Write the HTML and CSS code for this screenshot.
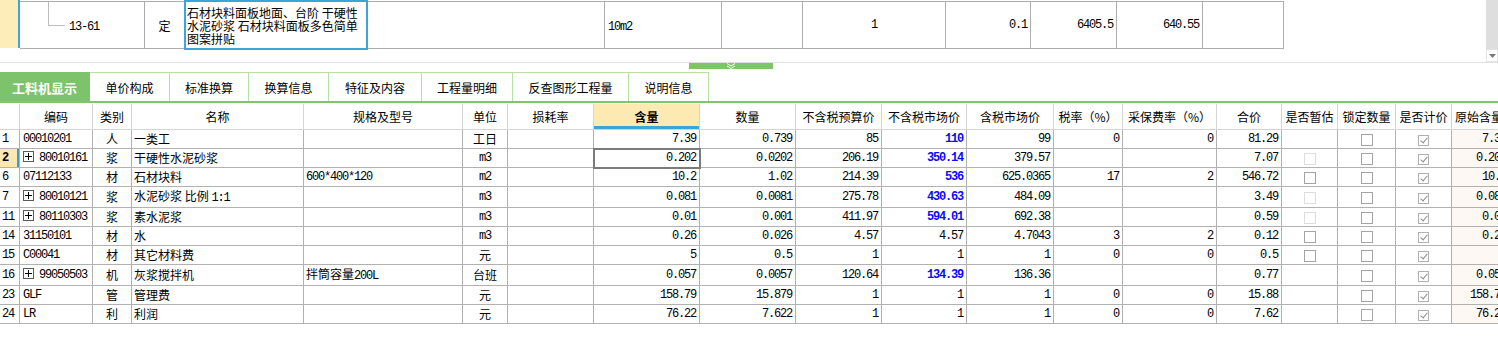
FILE: index.html
```html
<!DOCTYPE html>
<html lang="zh-CN">
<head>
<meta charset="utf-8">
<title>工料机显示</title>
<link rel="stylesheet" href="styles.css">
</head>
<body>
<div class="top">
  <div class="selbar"></div>
  <table class="prev">
    <colgroup>
      <col class="p1"><col class="p2"><col class="p3"><col class="p4"><col class="p5"><col class="p6"><col class="p7"><col class="p8"><col class="p9"><col class="p10"><col class="p11">
    </colgroup>
    <tr>
      <td class="tree"><span class="treeline"></span><span class="m">13-61</span></td>
      <td class="c">定</td>
      <td class="namebox">石材块料面板地面、台阶 干硬性水泥砂浆 石材块料面板多色简单图案拼贴</td>
      <td></td>
      <td><span class="m">10m2</span></td>
      <td></td>
      <td class="c m">1</td>
      <td class="r m">0.1</td>
      <td class="r m">6405.5</td>
      <td class="r m">640.55</td>
      <td></td>
    </tr>
  </table>
  <div class="vscroll"><div class="vthumb"></div><div class="varrow"><svg width="7" height="4" viewBox="0 0 7 4"><path d="M0 0H7L3.5 4Z" fill="#7a7a7a"/></svg></div></div>
</div>
<div class="split">
  <div class="handle"><svg width="12" height="6" viewBox="0 0 12 6"><path d="M2 0.5L6 3L10 0.5M2 3L6 5.5L10 3" fill="none" stroke="#fff" stroke-width="1"/></svg></div>
</div>
<div class="tabs">
  <div class="tab active">工料机显示</div>
  <div class="tab w80">单价构成</div>
  <div class="tab w79">标准换算</div>
  <div class="tab w80">换算信息</div>
  <div class="tab w93">特征及内容</div>
  <div class="tab w91">工程量明细</div>
  <div class="tab w116">反查图形工程量</div>
  <div class="tab w80">说明信息</div>
</div>
<table class="grid">
  <colgroup>
    <col class="g0"><col class="g1"><col class="g2"><col class="g3"><col class="g4"><col class="g5"><col class="g6"><col class="g7"><col class="g8"><col class="g9"><col class="g10"><col class="g11"><col class="g12"><col class="g13"><col class="g14"><col class="g15"><col class="g16"><col class="g17"><col class="g18">
  </colgroup>
  <thead>
    <tr>
      <th></th><th>编码</th><th>类别</th><th>名称</th><th>规格及型号</th><th>单位</th><th>损耗率</th><th class="hsel">含量</th><th>数量</th><th>不含税预算价</th><th>不含税市场价</th><th>含税市场价</th><th>税率（%）</th><th>采保费率（%）</th><th>合价</th><th>是否暂估</th><th>锁定数量</th><th>是否计价</th><th class="hl">原始含量</th>
    </tr>
  </thead>
  <tbody>
    <tr>
      <td class="no m">1</td><td class="code m">00010201</td><td class="c">人</td><td class="tx">一类工</td><td></td><td class="c">工日</td><td></td>
      <td class="r m">7.39</td><td class="r m">0.739</td><td class="r m">85</td><td class="r m b">110</td><td class="r m">99</td><td class="r m">0</td><td class="r m">0</td><td class="r m">81.29</td>
      <td></td><td class="c"><span class="cb"></span></td><td class="c"><span class="cb on"></span></td><td class="orig m">7.39</td>
    </tr>
    <tr class="cur">
      <td class="no m nosel">2</td><td class="code m"><span class="plus"></span>80010161</td><td class="c">浆</td><td class="tx">干硬性水泥砂浆</td><td></td><td class="c m">m3</td><td></td>
      <td class="r m focus">0.202</td><td class="r m">0.0202</td><td class="r m">206.19</td><td class="r m b">350.14</td><td class="r m">379.57</td><td></td><td></td><td class="r m">7.07</td>
      <td class="c"><span class="cb dis"></span></td><td class="c"><span class="cb"></span></td><td class="c"><span class="cb on"></span></td><td class="orig m">0.202</td>
    </tr>
    <tr>
      <td class="no m">6</td><td class="code m">07112133</td><td class="c">材</td><td class="tx">石材块料</td><td class="tx m">600*400*120</td><td class="c m">m2</td><td></td>
      <td class="r m">10.2</td><td class="r m">1.02</td><td class="r m">214.39</td><td class="r m b">536</td><td class="r m">625.0365</td><td class="r m">17</td><td class="r m">2</td><td class="r m">546.72</td>
      <td class="c"><span class="cb"></span></td><td class="c"><span class="cb"></span></td><td class="c"><span class="cb on"></span></td><td class="orig m">10.2</td>
    </tr>
    <tr>
      <td class="no m">7</td><td class="code m"><span class="plus"></span>80010121</td><td class="c">浆</td><td class="tx">水泥砂浆 比例 <span class="m">1:1</span></td><td></td><td class="c m">m3</td><td></td>
      <td class="r m">0.081</td><td class="r m">0.0081</td><td class="r m">275.78</td><td class="r m b">430.63</td><td class="r m">484.09</td><td></td><td></td><td class="r m">3.49</td>
      <td class="c"><span class="cb dis"></span></td><td class="c"><span class="cb"></span></td><td class="c"><span class="cb on"></span></td><td class="orig m">0.081</td>
    </tr>
    <tr>
      <td class="no m">11</td><td class="code m"><span class="plus"></span>80110303</td><td class="c">浆</td><td class="tx">素水泥浆</td><td></td><td class="c m">m3</td><td></td>
      <td class="r m">0.01</td><td class="r m">0.001</td><td class="r m">411.97</td><td class="r m b">594.01</td><td class="r m">692.38</td><td></td><td></td><td class="r m">0.59</td>
      <td class="c"><span class="cb dis"></span></td><td class="c"><span class="cb"></span></td><td class="c"><span class="cb on"></span></td><td class="orig m">0.01</td>
    </tr>
    <tr>
      <td class="no m">14</td><td class="code m">31150101</td><td class="c">材</td><td class="tx">水</td><td></td><td class="c m">m3</td><td></td>
      <td class="r m">0.26</td><td class="r m">0.026</td><td class="r m">4.57</td><td class="r m">4.57</td><td class="r m">4.7043</td><td class="r m">3</td><td class="r m">2</td><td class="r m">0.12</td>
      <td class="c"><span class="cb"></span></td><td class="c"><span class="cb"></span></td><td class="c"><span class="cb on"></span></td><td class="orig m">0.26</td>
    </tr>
    <tr>
      <td class="no m">15</td><td class="code m">C00041</td><td class="c">材</td><td class="tx">其它材料费</td><td></td><td class="c">元</td><td></td>
      <td class="r m">5</td><td class="r m">0.5</td><td class="r m">1</td><td class="r m">1</td><td class="r m">1</td><td class="r m">0</td><td class="r m">0</td><td class="r m">0.5</td>
      <td class="c"><span class="cb"></span></td><td class="c"><span class="cb"></span></td><td class="c"><span class="cb on"></span></td><td class="orig m">5</td>
    </tr>
    <tr>
      <td class="no m">16</td><td class="code m"><span class="plus"></span>99050503</td><td class="c">机</td><td class="tx">灰浆搅拌机</td><td class="tx">拌筒容量<span class="m">200L</span></td><td class="c">台班</td><td></td>
      <td class="r m">0.057</td><td class="r m">0.0057</td><td class="r m">120.64</td><td class="r m b">134.39</td><td class="r m">136.36</td><td></td><td></td><td class="r m">0.77</td>
      <td></td><td class="c"><span class="cb"></span></td><td class="c"><span class="cb on"></span></td><td class="orig m">0.057</td>
    </tr>
    <tr>
      <td class="no m">23</td><td class="code m">GLF</td><td class="c">管</td><td class="tx">管理费</td><td></td><td class="c">元</td><td></td>
      <td class="r m">158.79</td><td class="r m">15.879</td><td class="r m">1</td><td class="r m">1</td><td class="r m">1</td><td class="r m">0</td><td class="r m">0</td><td class="r m">15.88</td>
      <td></td><td class="c"><span class="cb"></span></td><td class="c"><span class="cb on"></span></td><td class="orig m">158.79</td>
    </tr>
    <tr>
      <td class="no m">24</td><td class="code m">LR</td><td class="c">利</td><td class="tx">利润</td><td></td><td class="c">元</td><td></td>
      <td class="r m">76.22</td><td class="r m">7.622</td><td class="r m">1</td><td class="r m">1</td><td class="r m">1</td><td class="r m">0</td><td class="r m">0</td><td class="r m">7.62</td>
      <td></td><td class="c"><span class="cb"></span></td><td class="c"><span class="cb on"></span></td><td class="orig m">76.22</td>
    </tr>
  </tbody>
</table>
</body>
</html>
```
FILE: styles.css
```css
html, body {
  margin: 0;
  padding: 0;
  background: #fff;
}
body {
  width: 1498px;
  height: 346px;
  overflow: hidden;
  font-family: "Noto Sans CJK SC", sans-serif;
  font-size: 12px;
  color: #000;
}
.m {
  font-family: "Liberation Mono", monospace;
  font-size: 12px;
  letter-spacing: -1.2px;
}

/* top previous row */
.top {
  display: flex;
  height: 62px;
}
.selbar {
  width: 18px;
  height: 48px;
  background: #fdedb8;
  border-right: 2px solid #3ca6d8;
  flex: none;
}
table.prev {
  border-collapse: separate;
  border-spacing: 0;
  table-layout: fixed;
  width: 1264px;
  height: 48px;
  margin-top: 1px;
  flex: none;
}
table.prev td {
  border-top: 1px solid #acacac;
  border-bottom: 1px solid #acacac;
  border-right: 1px solid #acacac;
  padding: 0 3px;
  height: 45px;
  white-space: nowrap;
  overflow: hidden;
}
.p1 { width: 125px; }
.p2 { width: 40px; }
.p3 { width: 182px; }
.p4 { width: 238px; }
.p5 { width: 117px; }
.p6 { width: 81px; }
.p7 { width: 143px; }
.p8 { width: 85px; }
.p9 { width: 86px; }
.p10 { width: 86px; }
.p11 { width: 81px; }
table.prev td.tree {
  position: relative;
  padding-left: 49px;
}
.treeline {
  position: absolute;
  left: 28px;
  top: -1px;
  width: 16px;
  height: 24px;
  border-left: 1px solid #bdbdbd;
  border-bottom: 1px solid #bdbdbd;
}
table.prev td.namebox {
  white-space: normal;
  line-height: 13px;
  padding: 0 2px;
  outline: 2px solid #3aa5d8;
  outline-offset: -1px;
  word-break: break-all;
}
.vscroll {
  margin-left: auto;
  width: 12px;
  height: 62px;
  display: flex;
  flex-direction: column;
  flex: none;
}
.vthumb {
  flex: 1;
  background: #dedede;
}
.varrow {
  height: 11px;
  border: 1px solid #e4e4e4;
  display: flex;
  align-items: center;
  justify-content: center;
  background: #fff;
}

/* splitter */
.split {
  height: 9px;
  border-top: 1px solid #e0e0e0;
  padding-left: 689px;
}
.handle {
  width: 84px;
  height: 6px;
  background: #80c36b;
  display: flex;
  justify-content: center;
  align-items: center;
}
.handle svg { display: block; }

/* tabs */
.tabs {
  display: flex;
  height: 29px;
  border-bottom: 2px solid #82c46e;
}
.tab {
  box-sizing: border-box;
  height: 29px;
  border-top: 1px solid #b6e0a4;
  border-right: 1px solid #b6e0a4;
  display: flex;
  align-items: center;
  justify-content: center;
  font-size: 12px;
  flex: none;
}
.tab.active {
  width: 90px;
  background: #7dc36b;
  color: #fff;
  font-weight: bold;
  font-size: 13px;
  border-color: #7dc36b;
}
.w79 { width: 79px; }
.w80 { width: 80px; }
.w91 { width: 91px; }
.w93 { width: 93px; }
.w116 { width: 116px; }

/* grid */
table.grid {
  border-collapse: separate;
  border-spacing: 0;
  table-layout: fixed;
  width: 1510px;
  margin-top: 1px;
}
.g0 { width: 20px; }
.g1 { width: 73px; }
.g2 { width: 39px; }
.g3 { width: 172px; }
.g4 { width: 159px; }
.g5 { width: 45px; }
.g6 { width: 86px; }
.g7 { width: 106px; }
.g8 { width: 96px; }
.g9 { width: 86px; }
.g10 { width: 85px; }
.g11 { width: 87px; }
.g12 { width: 69px; }
.g13 { width: 94px; }
.g14 { width: 65px; }
.g15 { width: 56px; }
.g16 { width: 58px; }
.g17 { width: 56px; }
.g18 { width: 58px; }
table.grid th {
  height: 25px;
  padding: 0;
  font-weight: normal;
  border-right: 1px solid #d4d4d4;
  border-bottom: 1px solid #d4d4d4;
  white-space: nowrap;
  overflow: hidden;
}
table.grid th.hsel {
  background: #fdeab3;
  font-weight: bold;
  box-shadow: inset 0 -3px 0 #3aa6d8;
}
table.grid th.hl {
  text-align: left;
  padding-left: 3px;
}
table.grid td {
  height: 18px;
  padding: 0 3px;
  border-right: 1px solid #b1b1b1;
  border-bottom: 1px solid #b1b1b1;
  white-space: nowrap;
  overflow: hidden;
  line-height: 18px;
}
table.grid td.no { padding-left: 2px; }
table.grid td.code { padding-left: 3px; }
table.grid td.tx { padding-left: 2px; }
.c { text-align: center; }
.r { text-align: right; }
.b {
  color: #0a0aff;
  font-weight: bold;
}
table.grid td.nosel {
  background: #fde9b0;
  box-shadow: inset -2px 0 0 #3a9fd6;
  font-weight: bold;
}
table.grid td.focus {
  outline: 2px solid #7b7b7b;
  outline-offset: -1px;
}
table.grid td.orig {
  background: #fdf8f3;
  text-align: right;
  padding-right: 3px;
}
.plus {
  display: inline-block;
  box-sizing: border-box;
  width: 11px;
  height: 11px;
  border: 1px solid #5a5a5a;
  margin-right: 5px;
  vertical-align: -1px;
  position: relative;
}
.plus::before {
  content: "";
  position: absolute;
  left: 1px;
  top: 4px;
  width: 7px;
  height: 1px;
  background: #000;
}
.plus::after {
  content: "";
  position: absolute;
  left: 4px;
  top: 1px;
  width: 1px;
  height: 7px;
  background: #000;
}
.cb {
  display: inline-block;
  box-sizing: border-box;
  width: 12px;
  height: 12px;
  border: 1px solid #a4a4a4;
  background: #fff;
  vertical-align: -2px;
  position: relative;
}
.cb.dis { border-color: #dedede; }
.cb.on {
  width: 11px;
  height: 11px;
  border-color: #b0b0b0;
}
.cb.on::after {
  content: "";
  position: absolute;
  left: 3px;
  top: 0px;
  width: 3px;
  height: 6px;
  border-right: 1px solid #8a8a8a;
  border-bottom: 1px solid #8a8a8a;
  transform: rotate(40deg);
}
```
